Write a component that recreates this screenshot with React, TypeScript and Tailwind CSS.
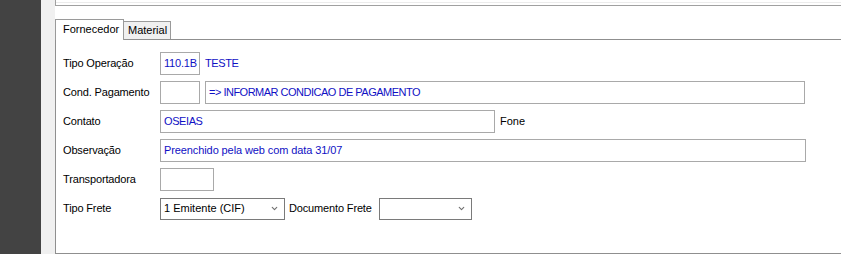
import { ChevronDown } from 'lucide-react'

const font = { fontFamily: '"Liberation Sans", Arial, sans-serif' }

function Box({ w, value, className = '' }: { w: string; value?: string; className?: string }) {
  return (
    <div className={`${w} h-[23px] border border-[#a9a9a9] bg-white flex items-center pl-[3px] text-[11px] text-[#1010c4] whitespace-nowrap overflow-hidden ${className}`}>
      {value}
    </div>
  )
}

function Select({ w, value }: { w: string; value?: string }) {
  return (
    <div className={`${w} h-[22px] border border-[#7a7a7a] bg-white flex items-center justify-between pl-[3px] pr-[5px] text-[11px] text-black`}>
      <span>{value}</span>
      <ChevronDown className="w-[9px] h-[9px] text-[#707070]" strokeWidth={3} />
    </div>
  )
}

function Row({ label, children }: { label: string; children: React.ReactNode }) {
  return (
    <div className="flex items-center h-[23px]">
      <span className="w-[97px] shrink-0 text-[11px] text-black tracking-[-0.15px]">{label}</span>
      {children}
    </div>
  )
}

export default function App() {
  return (
    <div className="w-[841px] h-[254px] flex overflow-hidden bg-[#f0f0f0]" style={font}>
      {/* Dark side bar */}
      <div className="w-[41px] h-full bg-[#434343] shrink-0" />
      <div className="w-[14px] h-full bg-[#f0f0f0] shrink-0" />

      <div className="flex-1 flex flex-col bg-white">
        {/* Top panel edge */}
        <div className="h-[6px] border-l border-b border-[#a0a0a0] bg-white shrink-0">
          <div className="h-[3px] border-b border-[#ececec]" />
        </div>
        <div className="h-[12px] shrink-0 bg-white" />

        {/* Tabs */}
        <div className="flex items-end h-[21px] shrink-0">
          <div className="w-[69px] h-[21px] border-l border-t border-r border-[#9a9a9a] bg-white flex items-center pl-[7px] text-[11px] text-black relative z-10 -mb-px pb-px">
            Fornecedor
          </div>
          <div className="w-[47px] h-[18px] border-t border-r border-[#9a9a9a] bg-[#f0f0f0] flex items-center pl-[4px] text-[11px] text-black">
            Material
          </div>
          <div className="flex-1" />
        </div>

        {/* Tab panel */}
        <div className="h-[215px] border-l border-t border-b border-[#8f8f8f] bg-white pl-[7px] pt-[12px] flex flex-col gap-[6px]">
          <Row label="Tipo Operação">
            <Box w="w-[40px]" value="110.1B" className="tracking-[-0.2px]" />
            <span className="ml-[5px] text-[11px] text-[#1010c4] tracking-[-0.4px]">TESTE</span>
          </Row>
          <Row label="Cond. Pagamento">
            <Box w="w-[40px]" />
            <Box w="w-[600px]" className="ml-[5px] tracking-[-0.5px]" value="=> INFORMAR CONDICAO DE PAGAMENTO" />
          </Row>
          <Row label="Contato">
            <Box w="w-[335px]" value="OSEIAS" className="tracking-[-0.4px]" />
            <span className="ml-[5px] text-[11px] text-black">Fone</span>
          </Row>
          <Row label="Observação">
            <Box w="w-[646px]" value="Preenchido pela web com data 31/07" className="tracking-[-0.1px]" />
          </Row>
          <Row label="Transportadora">
            <Box w="w-[54px]" />
          </Row>
          <Row label="Tipo Frete">
            <Select w="w-[125px]" value="1 Emitente (CIF)" />
            <span className="ml-[4px] w-[90px] text-[11px] text-black tracking-[-0.15px]">Documento Frete</span>
            <Select w="w-[93px]" />
          </Row>
        </div>
      </div>
    </div>
  )
}
